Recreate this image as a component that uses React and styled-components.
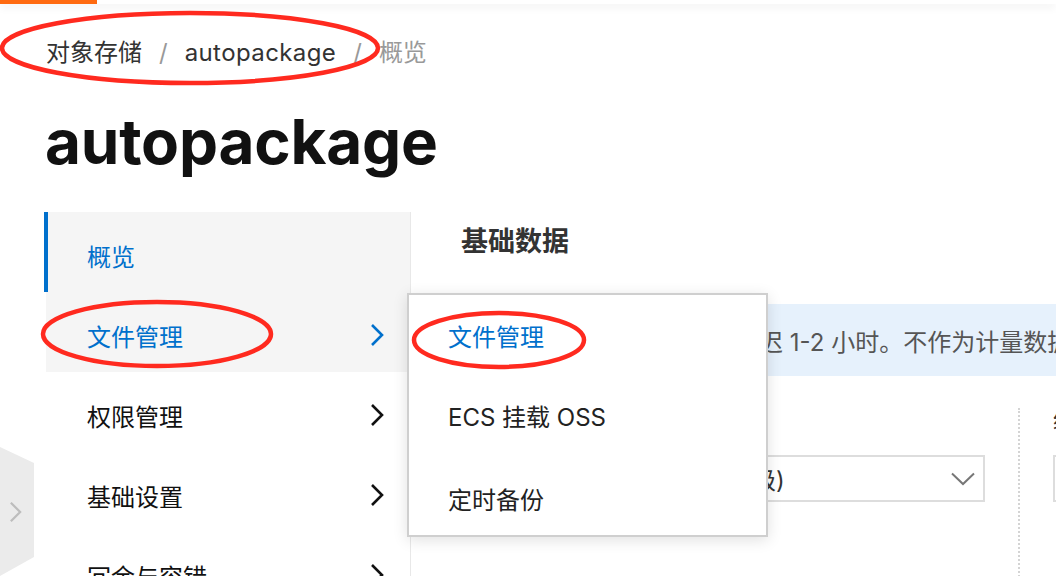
import styled, { createGlobalStyle } from "styled-components";

const GlobalStyle = createGlobalStyle`
  html, body {
    margin: 0;
    padding: 0;
    background: #ffffff;
  }
  body {
    font-family: Inter, "Noto Sans CJK SC", sans-serif;
    color: #333333;
  }
`;

const Page = styled.div`
  position: relative;
  width: 1056px;
  height: 576px;
  overflow: hidden;
  background: #ffffff;
`;

const TopBar = styled.div`
  height: 4px;
  background: #ffffff;
  box-shadow: 0 3px 8px rgba(0, 0, 0, 0.08);
  .accent {
    width: 97px;
    height: 4px;
    background: #ff6a10;
  }
`;

const Breadcrumb = styled.nav`
  display: flex;
  align-items: center;
  padding: 33px 0 0 46px;
  font-size: 24px;
  line-height: 32px;
  color: #333333;
  span.name {
    letter-spacing: 0.4px;
  }
  span.sep {
    color: #999999;
    margin: 0 17px;
  }
  span.current {
    color: #999999;
  }
`;

const Title = styled.h1`
  margin: 42px 0 39px 0;
  padding-left: 45px;
  font-size: 62px;
  line-height: 62px;
  font-weight: 700;
  letter-spacing: -0.2px;
  color: #111111;
`;

const Layout = styled.div`
  display: flex;
  margin-left: 46px;
`;

const Sidebar = styled.ul`
  list-style: none;
  margin: 0;
  padding: 0;
  width: 364px;
  min-height: 400px;
  border-right: 1px solid #e8e8e8;
  flex-shrink: 0;
`;

const NavItem = styled.li`
  position: relative;
  display: flex;
  align-items: center;
  justify-content: space-between;
  height: 80px;
  box-sizing: border-box;
  padding: 6px 26px 0 41px;
  font-size: 24px;
  color: ${(p) => (p.$highlight ? "#0070cc" : "#111111")};
  background: ${(p) => (p.$highlight ? "#f5f5f5" : "transparent")};
  &::before {
    content: "";
    display: ${(p) => (p.$active ? "block" : "none")};
    position: absolute;
    left: -2px;
    top: 0;
    bottom: 0;
    width: 4px;
    background: #0070cc;
  }
`;

const SubMenu = styled.ul`
  position: absolute;
  top: 1px;
  left: 361px;
  z-index: 2;
  list-style: none;
  margin: 0;
  padding: 0;
  width: 361px;
  box-sizing: border-box;
  background: #ffffff;
  border: 2px solid #cfcfcf;
  box-shadow: 0 3px 14px rgba(0, 0, 0, 0.12);
`;

const SubItem = styled.li`
  display: flex;
  align-items: center;
  height: 80px;
  padding: ${(p) => p.$shift || 0}px 0 0 39px;
  box-sizing: border-box;
  font-size: 24px;
  color: ${(p) => (p.$active ? "#0070cc" : "#222222")};
`;

const Content = styled.section`
  flex: 1;
  padding: 14px 0 0 50px;
  min-width: 0;
`;

const SectionTitle = styled.h2`
  margin: 0;
  font-size: 27px;
  line-height: 32px;
  font-weight: 700;
  color: #333333;
`;

const Notice = styled.div`
  margin-top: 46px;
  height: 72px;
  display: flex;
  align-items: center;
  padding-left: 10px;
  background: #e6f1fc;
  color: #555555;
  font-size: 24px;
  white-space: nowrap;
  overflow: hidden;
`;

const FilterRow = styled.div`
  display: flex;
  margin-top: 32px;
`;

const FilterCol = styled.div`
  width: ${(p) => p.$width}px;
  flex-shrink: 0;
  label {
    display: block;
    height: 24px;
    line-height: 24px;
    font-size: 22px;
    color: #333333;
    white-space: nowrap;
    overflow: hidden;
  }
`;

const Divider = styled.div`
  width: 0;
  margin: 0 33px;
  border-left: 2px dotted #d4d4d4;
  height: 200px;
`;

const SelectBox = styled.div`
  margin-top: 23px;
  height: 47px;
  box-sizing: border-box;
  border: 2px solid #dddddd;
  display: flex;
  align-items: center;
  justify-content: space-between;
  padding: 0 8px 0 1px;
  font-size: 24px;
  color: #333333;
  white-space: nowrap;
  overflow: hidden;
`;

const Handle = styled.div`
  position: absolute;
  left: 0;
  top: 447px;
  width: 34px;
  height: 129px;
  background: #ebebeb;
  clip-path: polygon(0 0, 100% 16px, 100% 110px, 0 129px);
  display: flex;
  align-items: center;
  padding-left: 9px;
  box-sizing: border-box;
`;

const Marks = styled.svg`
  position: absolute;
  left: 0;
  top: 0;
  pointer-events: none;
  z-index: 5;
`;

const Chevron = ({ color = "#111", w = 14, h = 24, sw = 2.6 }) => (
  <svg width={w} height={h} viewBox="0 0 14 24" fill="none">
    <path d="M2 2 L12 12 L2 22" stroke={color} strokeWidth={sw} />
  </svg>
);

const ChevronDown = () => (
  <svg width="24" height="14" viewBox="0 0 24 14" fill="none">
    <path d="M1 1.5 L12 12 L23 1.5" stroke="#777" strokeWidth="2" />
  </svg>
);

const navItems = [
  { label: "概览", active: true },
  { label: "文件管理", arrow: true, open: true },
  { label: "权限管理", arrow: true },
  { label: "基础设置", arrow: true },
  { label: "冗余与容错", arrow: true },
];

export default function App() {
  return (
    <Page>
      <GlobalStyle />
      <TopBar>
        <div className="accent" />
      </TopBar>
      <Breadcrumb>
        <span>对象存储</span>
        <span className="sep">/</span>
        <span className="name">autopackage</span>
        <span className="sep">/</span>
        <span className="current">概览</span>
      </Breadcrumb>
      <Title>autopackage</Title>
      <Layout>
        <Sidebar>
          {navItems.map((item) => (
            <NavItem
              key={item.label}
              $active={item.active}
              $highlight={item.active || item.open}
            >
              <span>{item.label}</span>
              {item.arrow && <Chevron color={item.open ? "#0070cc" : "#111"} />}
              {item.open && (
                <SubMenu>
                  <SubItem $active>文件管理</SubItem>
                  <SubItem>ECS 挂载 OSS</SubItem>
                  <SubItem $shift={6}>定时备份</SubItem>
                </SubMenu>
              )}
            </NavItem>
          ))}
        </Sidebar>
        <Content>
          <SectionTitle>基础数据</SectionTitle>
          <Notice>统计数据非实时更新，约延迟 1-2 小时。不作为计量数据，仅供参考。</Notice>
          <FilterRow>
            <FilterCol $width={524}>
              <label>存储类型</label>
              <SelectBox>
                <span>全部存储类型（标准与低频级)</span>
                <ChevronDown />
              </SelectBox>
            </FilterCol>
            <Divider />
            <FilterCol $width={300}>
              <label>统计时间</label>
              <SelectBox>
                <span>最近 7 天</span>
              </SelectBox>
            </FilterCol>
          </FilterRow>
        </Content>
      </Layout>
      <Handle>
        <Chevron color="#bdbdbd" w={13} h={24} sw={2.4} />
      </Handle>
      <Marks width="1056" height="576">
        <g fill="none" stroke="#ff2a1f" strokeWidth="4.5">
          <ellipse cx="190" cy="48" rx="188" ry="35" />
          <ellipse cx="157" cy="334" rx="114" ry="32" />
          <ellipse cx="499" cy="340" rx="85" ry="27" />
        </g>
      </Marks>
    </Page>
  );
}
